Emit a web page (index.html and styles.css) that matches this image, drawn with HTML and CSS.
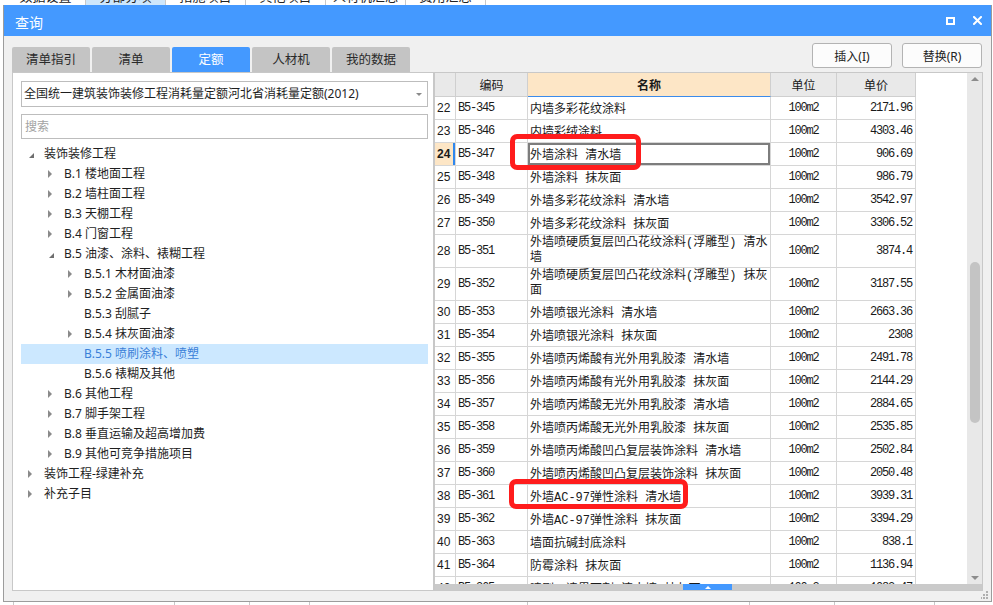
FILE: index.html
```html
<!DOCTYPE html>
<html lang="zh-CN">
<head>
<meta charset="utf-8">
<title>查询</title>
<link rel="stylesheet" href="styles.css">
</head>
<body>
<div class="app">
  <div class="app-tabs">
    <div class="app-tab"><span>数据设置</span></div>
    <div class="app-tab active"><span>分部分项</span></div>
    <div class="app-tab"><span>措施项目</span></div>
    <div class="app-tab"><span>其他项目</span></div>
    <div class="app-tab"><span>人材机汇总</span></div>
    <div class="app-tab"><span>费用汇总</span></div>
  </div>
  <div class="app-body"></div>
  <div class="app-grid">
    <span class="app-col c1"></span><span class="app-col c2"></span><span class="app-col c3"></span><span class="app-col c4"></span><span class="app-col c5"></span><span class="app-col c6"></span><span class="app-col c7"></span><span class="app-col c8"></span>
  </div>
</div>

<div class="dialog">
  <div class="titlebar">
    <span class="title">查询</span>
    <div class="win-btns">
      <svg class="win-icon" width="9" height="8" viewBox="0 0 9 8"><rect x="1" y="1" width="7" height="6" fill="none" stroke="#fff" stroke-width="2"/></svg>
      <svg class="win-icon" width="9" height="9" viewBox="0 0 9 9"><path d="M1 1 L8 8 M8 1 L1 8" stroke="#fff" stroke-width="2" stroke-linecap="square"/></svg>
    </div>
  </div>
  <div class="dialog-body">
    <div class="toolbar">
      <div class="tabs">
        <div class="tab">清单指引</div>
        <div class="tab">清单</div>
        <div class="tab active">定额</div>
        <div class="tab">人材机</div>
        <div class="tab">我的数据</div>
      </div>
      <div class="actions">
        <button class="btn">插入(I)</button>
        <button class="btn">替换(R)</button>
      </div>
    </div>
    <div class="main">
      <div class="left-panel">
        <div class="combo"><span class="combo-text">全国统一建筑装饰装修工程消耗量定额河北省消耗量定额(2012)</span><span class="combo-arrow"></span></div>
        <div class="search">搜索</div>
        <ul class="tree">
          <li class="tree-row l0"><span class="twisty open"></span><span class="label">装饰装修工程</span></li>
          <li class="tree-row l1"><span class="twisty closed"></span><span class="label">B.1 楼地面工程</span></li>
          <li class="tree-row l1"><span class="twisty closed"></span><span class="label">B.2 墙柱面工程</span></li>
          <li class="tree-row l1"><span class="twisty closed"></span><span class="label">B.3 天棚工程</span></li>
          <li class="tree-row l1"><span class="twisty closed"></span><span class="label">B.4 门窗工程</span></li>
          <li class="tree-row l1"><span class="twisty open"></span><span class="label">B.5 油漆、涂料、裱糊工程</span></li>
          <li class="tree-row l2"><span class="twisty closed"></span><span class="label">B.5.1 木材面油漆</span></li>
          <li class="tree-row l2"><span class="twisty closed"></span><span class="label">B.5.2 金属面油漆</span></li>
          <li class="tree-row l2"><span class="twisty"></span><span class="label">B.5.3 刮腻子</span></li>
          <li class="tree-row l2"><span class="twisty closed"></span><span class="label">B.5.4 抹灰面油漆</span></li>
          <li class="tree-row l2 selected"><span class="twisty"></span><span class="label">B.5.5 喷刷涂料、喷塑</span></li>
          <li class="tree-row l2"><span class="twisty"></span><span class="label">B.5.6 裱糊及其他</span></li>
          <li class="tree-row l1"><span class="twisty closed"></span><span class="label">B.6 其他工程</span></li>
          <li class="tree-row l1"><span class="twisty closed"></span><span class="label">B.7 脚手架工程</span></li>
          <li class="tree-row l1"><span class="twisty closed"></span><span class="label">B.8 垂直运输及超高增加费</span></li>
          <li class="tree-row l1"><span class="twisty closed"></span><span class="label">B.9 其他可竞争措施项目</span></li>
          <li class="tree-row l0"><span class="twisty closed"></span><span class="label">装饰工程-绿建补充</span></li>
          <li class="tree-row l0"><span class="twisty closed"></span><span class="label">补充子目</span></li>
        </ul>
      </div>
      <div class="grid-panel">
        <div class="grid-view">
          <div class="grid-scroll">
            <div class="g-row g-head"><div></div><div>编码</div><div class="h-name">名称</div><div>单位</div><div>单价</div></div>
            <div class="g-row r"><div class="c-num">22</div><div class="c-code">B5-345</div><div class="c-name">内墙多彩花纹涂料</div><div class="c-unit">100m2</div><div class="c-price">2171.96</div></div>
            <div class="g-row r"><div class="c-num">23</div><div class="c-code">B5-346</div><div class="c-name">内墙彩绒涂料</div><div class="c-unit">100m2</div><div class="c-price">4303.46</div></div>
            <div class="g-row r cur"><div class="c-num">24</div><div class="c-code">B5-347</div><div class="c-name">外墙涂料 清水墙</div><div class="c-unit">100m2</div><div class="c-price">906.69</div></div>
            <div class="g-row r"><div class="c-num">25</div><div class="c-code">B5-348</div><div class="c-name">外墙涂料 抹灰面</div><div class="c-unit">100m2</div><div class="c-price">986.79</div></div>
            <div class="g-row r"><div class="c-num">26</div><div class="c-code">B5-349</div><div class="c-name">外墙多彩花纹涂料 清水墙</div><div class="c-unit">100m2</div><div class="c-price">3542.97</div></div>
            <div class="g-row r"><div class="c-num">27</div><div class="c-code">B5-350</div><div class="c-name">外墙多彩花纹涂料 抹灰面</div><div class="c-unit">100m2</div><div class="c-price">3306.52</div></div>
            <div class="g-row r2"><div class="c-num">28</div><div class="c-code">B5-351</div><div class="c-name"><span>外墙喷硬质复层凹凸花纹涂料(浮雕型) 清水墙</span></div><div class="c-unit">100m2</div><div class="c-price">3874.4</div></div>
            <div class="g-row r2"><div class="c-num">29</div><div class="c-code">B5-352</div><div class="c-name"><span>外墙喷硬质复层凹凸花纹涂料(浮雕型) 抹灰面</span></div><div class="c-unit">100m2</div><div class="c-price">3187.55</div></div>
            <div class="g-row r"><div class="c-num">30</div><div class="c-code">B5-353</div><div class="c-name">外墙喷银光涂料 清水墙</div><div class="c-unit">100m2</div><div class="c-price">2663.36</div></div>
            <div class="g-row r"><div class="c-num">31</div><div class="c-code">B5-354</div><div class="c-name">外墙喷银光涂料 抹灰面</div><div class="c-unit">100m2</div><div class="c-price">2308</div></div>
            <div class="g-row r"><div class="c-num">32</div><div class="c-code">B5-355</div><div class="c-name">外墙喷丙烯酸有光外用乳胶漆 清水墙</div><div class="c-unit">100m2</div><div class="c-price">2491.78</div></div>
            <div class="g-row r"><div class="c-num">33</div><div class="c-code">B5-356</div><div class="c-name">外墙喷丙烯酸有光外用乳胶漆 抹灰面</div><div class="c-unit">100m2</div><div class="c-price">2144.29</div></div>
            <div class="g-row r"><div class="c-num">34</div><div class="c-code">B5-357</div><div class="c-name">外墙喷丙烯酸无光外用乳胶漆 清水墙</div><div class="c-unit">100m2</div><div class="c-price">2884.65</div></div>
            <div class="g-row r"><div class="c-num">35</div><div class="c-code">B5-358</div><div class="c-name">外墙喷丙烯酸无光外用乳胶漆 抹灰面</div><div class="c-unit">100m2</div><div class="c-price">2535.85</div></div>
            <div class="g-row r"><div class="c-num">36</div><div class="c-code">B5-359</div><div class="c-name">外墙喷丙烯酸凹凸复层装饰涂料 清水墙</div><div class="c-unit">100m2</div><div class="c-price">2502.84</div></div>
            <div class="g-row r"><div class="c-num">37</div><div class="c-code">B5-360</div><div class="c-name">外墙喷丙烯酸凹凸复层装饰涂料 抹灰面</div><div class="c-unit">100m2</div><div class="c-price">2050.48</div></div>
            <div class="g-row r"><div class="c-num">38</div><div class="c-code">B5-361</div><div class="c-name">外墙AC-97弹性涂料 清水墙</div><div class="c-unit">100m2</div><div class="c-price">3939.31</div></div>
            <div class="g-row r"><div class="c-num">39</div><div class="c-code">B5-362</div><div class="c-name">外墙AC-97弹性涂料 抹灰面</div><div class="c-unit">100m2</div><div class="c-price">3394.29</div></div>
            <div class="g-row r"><div class="c-num">40</div><div class="c-code">B5-363</div><div class="c-name">墙面抗碱封底涂料</div><div class="c-unit">100m2</div><div class="c-price">838.1</div></div>
            <div class="g-row r"><div class="c-num">41</div><div class="c-code">B5-364</div><div class="c-name">防霉涂料 抹灰面</div><div class="c-unit">100m2</div><div class="c-price">1136.94</div></div>
            <div class="g-row r"><div class="c-num">42</div><div class="c-code">B5-365</div><div class="c-name">喷刷一遍界面剂 清水墙 抹灰面</div><div class="c-unit">100m2</div><div class="c-price">1082.47</div></div>
          </div>
          <div class="vscroll">
            <span class="vs-up"></span>
            <span class="vs-thumb"></span>
            <span class="vs-down"></span>
          </div>
          <div class="mark mark1"></div>
          <div class="mark mark2"></div>
        </div>
        <div class="hbar"><span class="hbar-handle"></span></div>
      </div>
    </div>
    <div class="statusbar">
      <svg class="grip" width="7" height="8" viewBox="0 0 7 8">
        <rect x="5" y="0" width="2" height="2" fill="#b0b0b0"/>
        <rect x="2" y="3" width="2" height="2" fill="#b0b0b0"/>
        <rect x="5" y="3" width="2" height="2" fill="#b0b0b0"/>
        <rect x="-1" y="6" width="2" height="2" fill="#b0b0b0"/>
        <rect x="2" y="6" width="2" height="2" fill="#b0b0b0"/>
        <rect x="5" y="6" width="2" height="2" fill="#b0b0b0"/>
      </svg>
    </div>
  </div>
</div>
</body>
</html>
```

FILE: styles.css
```css
* { box-sizing: border-box; }
html, body { margin: 0; padding: 0; }
body {
  width: 993px;
  height: 605px;
  overflow: hidden;
  position: relative;
  background: #fff;
  font-family: "Noto Sans", "Noto Sans CJK SC", sans-serif;
  font-size: 12px;
  color: #1e1e1e;
}

/* background application */
.app { height: 605px; display: flex; flex-direction: column; }
.app-tabs { height: 5px; flex: none; display: flex; padding-left: 6px; overflow: hidden; background: #fff; }
.app-tab { width: 80px; height: 5px; border-right: 1px solid #c8c8c8; overflow: hidden; text-align: center; }
.app-tab span { display: block; margin-top: -11px; line-height: 15px; font-size: 13px; color: #222; }
.app-tab.active { background: #cde6fb; }
.app-body { flex: 1; background: #fff; }
.app-grid { height: 4px; flex: none; display: flex; }
.app-col { height: 4px; border-right: 1px solid #c8c8c8; }
.app-col.c1 { width: 14px; }
.app-col.c2 { width: 161px; }
.app-col.c3 { width: 75px; }
.app-col.c4 { width: 60px; }
.app-col.c5 { width: 218px; }
.app-col.c6 { width: 222px; }
.app-col.c7 { width: 85px; }
.app-col.c8 { width: 100px; }

/* dialog window */
.dialog {
  position: absolute;
  left: 3px;
  top: 5px;
  width: 989px;
  height: 597px;
  border: 1px solid #9c9c9c;
  border-top: 0;
  background: #f0f0f0;
  display: flex;
  flex-direction: column;
}
.titlebar {
  height: 31px;
  flex: none;
  background: #4499ff;
  display: flex;
  align-items: center;
  justify-content: space-between;
  padding: 2px 9px 0 11px;
  color: #fff;
}
.title { font-size: 14px; line-height: 20px; font-family: "Noto Sans CJK SC", sans-serif; }
.win-btns { display: flex; align-items: center; gap: 18px; margin-top: -2px; }
.win-icon { display: block; }

.dialog-body { flex: 1; display: flex; flex-direction: column; padding: 0 8px; }

.toolbar { height: 36px; flex: none; display: flex; justify-content: space-between; }
.tabs { display: flex; gap: 2px; align-self: flex-end; }
.tab {
  width: 78px;
  height: 25px;
  line-height: 25px;
  text-align: center;
  background: #c4c4c4;
  color: #2a2a2a;
  border-radius: 2px 2px 0 0;
  font-size: 12.5px;
}
.tab.active { background: #4499ff; color: #fff; }
.actions { display: flex; gap: 10px; margin-top: 7px; margin-right: 1px; align-self: flex-start; }
.btn {
  width: 80px;
  height: 25px;
  padding: 0;
  border: 1px solid #b3b3b3;
  border-radius: 3px;
  background: #fcfcfc;
  font-family: "Noto Sans", "Noto Sans CJK SC", sans-serif;
  font-size: 12px;
  color: #222;
}

.main { height: 519px; flex: none; display: flex; }

/* left tree panel */
.left-panel {
  width: 422px;
  flex: none;
  background: #fff;
  border: 1px solid #c8c8c8;
  padding: 8px 5px 0 8px;
  display: flex;
  flex-direction: column;
}
.combo {
  height: 26px;
  flex: none;
  border: 1px solid #bdbdbd;
  display: flex;
  align-items: center;
  justify-content: space-between;
  padding: 0 5px 0 2px;
}
.combo-text { line-height: 16px; white-space: nowrap; }
.combo-arrow {
  width: 0; height: 0;
  border-left: 3px solid transparent;
  border-right: 3px solid transparent;
  border-top: 3px solid #8a8a8a;
  margin-top: 1px;
}
.search {
  margin-top: 7px;
  height: 25px;
  flex: none;
  border: 1px solid #bdbdbd;
  padding-left: 3px;
  line-height: 23px;
  color: #a3a3a3;
}
.tree { list-style: none; margin: 5px 0 0; padding: 0; }
.tree-row { height: 20px; display: flex; align-items: center; line-height: 20px; white-space: nowrap; color: #1e1e1e; }
.tree-row.l1 { padding-left: 20px; }
.tree-row.l2 { padding-left: 40px; }
.tree-row.selected { background: #cce8ff; color: #3a7fd8; }
.twisty { width: 23px; height: 20px; flex: none; display: flex; align-items: center; }
.twisty.closed::before {
  content: "";
  margin-left: 7px;
  border-top: 4px solid transparent;
  border-bottom: 4px solid transparent;
  border-left: 4px solid #8a8a8a;
}
.twisty.open::before {
  content: "";
  margin-left: 8px;
  margin-top: 2px;
  border-top: 5px solid transparent;
  border-right: 5px solid #6e6e6e;
}

/* right grid panel */
.grid-panel {
  flex: 1;
  background: #fff;
  border: 1px solid #c8c8c8;
  display: flex;
  flex-direction: column;
}
.grid-view { height: 511px; flex: none; display: flex; position: relative; }
.grid-scroll { flex: 1; overflow: hidden; background: #fff; }

.g-row { display: grid; grid-template-columns: 21px 72px 243px 66px 79px; width: 481px; }
.g-row > div {
  border-right: 1px solid #d6d6d6;
  border-bottom: 1px solid #d6d6d6;
  display: flex;
  align-items: center;
  overflow: hidden;
  white-space: nowrap;
  color: #1a1a1a;
}
.g-head { height: 24px; }
.g-head > div {
  background: #e9e9e9;
  justify-content: center;
  border-color: #cfcfcf;
  font-family: "Noto Sans CJK SC", sans-serif;
}
.g-head .h-name { background: #fde6c6; font-weight: bold; border-bottom-color: #3b8beb; }
.g-row.r { height: 23px; }
.g-row.r2 { height: 33px; }
.c-num { font-family: "Liberation Sans", sans-serif; padding-left: 2px; }
.c-code { font-family: "Liberation Mono", monospace; letter-spacing: -1.2px; padding-left: 2px; }
.c-name { font-family: "Liberation Mono", "Noto Sans CJK SC", monospace; padding-left: 2px; }
.r2 .c-name { white-space: normal; line-height: 15px; }
.c-unit { justify-content: center; font-family: "Liberation Mono", monospace; letter-spacing: -1.2px; }
.c-price { justify-content: flex-end; padding-right: 3px; font-family: "Liberation Mono", monospace; letter-spacing: -1.2px; }
.cur .c-num { background: #fde6c6; font-weight: bold; box-shadow: inset -2px 0 0 #2f87ee; }
.cur .c-name { box-shadow: inset 0 0 0 2px #7d7d7d; }

.vscroll {
  width: 15px;
  flex: none;
  background: #e8e8e8;
  display: flex;
  flex-direction: column;
  align-items: center;
}
.vs-up {
  margin-top: 4px;
  width: 0; height: 0;
  border-left: 4px solid transparent;
  border-right: 4px solid transparent;
  border-bottom: 4px solid #8c8c8c;
}
.vs-thumb {
  margin-top: 181px;
  width: 10px;
  height: 161px;
  border-radius: 5px;
  background: #c4c4c4;
}
.vs-down {
  margin-top: auto;
  margin-bottom: 4px;
  width: 0; height: 0;
  border-left: 4px solid transparent;
  border-right: 4px solid transparent;
  border-top: 4px solid #8c8c8c;
}

.mark {
  position: absolute;
  border: 5px solid #ff1c1c;
  border-radius: 7px;
}
.mark1 { left: 75px; top: 61px; width: 131px; height: 36px; }
.mark2 { left: 74px; top: 406px; width: 179px; height: 30px; }

.hbar { height: 6px; flex: none; background: #cacaca; display: flex; }
.hbar-handle {
  margin-left: 248px;
  width: 49px;
  height: 6px;
  background: #4499ff;
  display: flex;
  align-items: center;
  justify-content: center;
}
.hbar-handle::before {
  content: "";
  border-left: 3px solid transparent;
  border-right: 3px solid transparent;
  border-bottom: 3px solid #fff;
}

.statusbar { flex: 1; display: flex; justify-content: flex-end; align-items: flex-start; }
.grip { display: block; margin-right: -5px; }
```
